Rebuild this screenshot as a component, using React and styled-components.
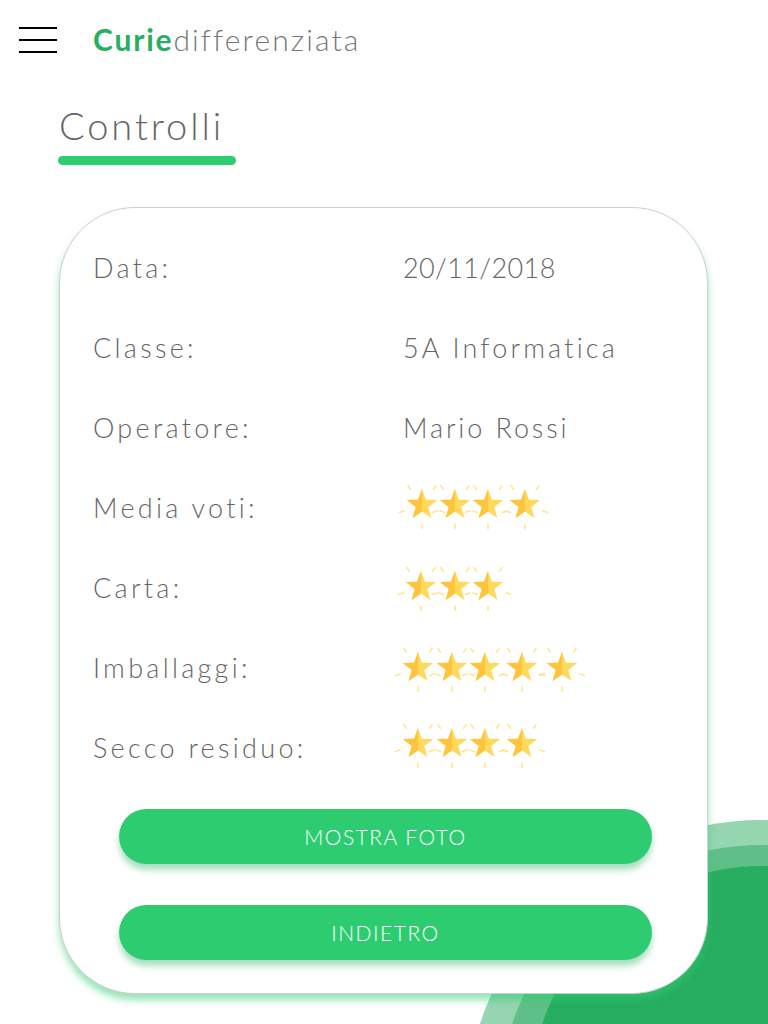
import React from "react";
import styled, { createGlobalStyle } from "styled-components";

const GlobalStyle = createGlobalStyle`
  html, body { margin: 0; padding: 0; background: #ffffff; }
  body { font-family: Lato, "Open Sans", sans-serif; }
  * { box-sizing: border-box; }
`;

const Page = styled.div`
  position: relative;
  width: 768px;
  height: 1024px;
  overflow: hidden;
  background: #fff;
`;

const Backdrop = styled.svg`
  position: absolute;
  right: 0;
  bottom: 0;
  width: 768px;
  height: 1024px;
  z-index: 0;
  pointer-events: none;
`;

const Content = styled.div`
  position: relative;
  z-index: 1;
`;

const Header = styled.header`
  display: flex;
  align-items: center;
  height: 80px;
  padding-left: 19px;
  gap: 36px;
`;

const Burger = styled.div`
  display: flex;
  flex-direction: column;
  gap: 10.5px;
  width: 38px;
  & > span {
    display: block;
    height: 1.5px;
    background: #000;
  }
`;

const Logo = styled.div`
  font-size: 30px;
  letter-spacing: 2.1px;
  color: #777;
  font-weight: 300;
  line-height: 1;
  margin-top: -2px;
`;

const LogoStrong = styled.span`
  color: #27ae60;
  font-weight: 700;
  letter-spacing: 1.8px;
`;

const TitleBlock = styled.div`
  padding-left: 58px;
  margin-top: 22px;
  display: inline-flex;
  flex-direction: column;
`;

const Title = styled.h1`
  margin: 0 0 0 1px;
  font-size: 38px;
  font-weight: 300;
  letter-spacing: 2.9px;
  color: #666;
  line-height: 46px;
`;

const Underline = styled.div`
  margin-top: 8px;
  width: 178px;
  height: 9px;
  border-radius: 5px;
  background: #2ecc71;
`;

const Card = styled.section`
  margin: 42px 0 0 59px;
  width: 649px;
  height: 787px;
  border: 1px solid #cfcfcf;
  border-radius: 76px;
  background: #fff;
  box-shadow: 0 6px 7px rgba(46, 204, 113, 0.5);
  padding: 19px 0 0 33px;
`;

const Rows = styled.div`
  display: grid;
  grid-template-columns: 310px 1fr;
  grid-auto-rows: 80px;
`;

const Label = styled.div`
  display: flex;
  align-items: center;
  font-size: 27px;
  font-weight: 300;
  letter-spacing: ${(p) => (p.$ls != null ? p.$ls : 3.3)}px;
  color: #666;
`;

const StarRow = styled.div`
  display: flex;
  align-items: center;
  margin-top: ${(p) => p.$dy || 0}px;
`;

const StarBox = styled.svg`
  flex: none;
  width: 46px;
  height: 46px;
  margin-left: ${(p) => p.$ml}px;
  overflow: visible;
`;

const Buttons = styled.div`
  display: flex;
  flex-direction: column;
  gap: 41px;
  margin: 22px 0 0 26px;
  width: 533px;
`;

const Button = styled.button`
  height: 55px;
  border: none;
  border-radius: 28px;
  background: #2ecc71;
  color: #fff;
  font-family: Lato, "Open Sans", sans-serif;
  font-size: 21px;
  font-weight: 300;
  letter-spacing: 1.5px;
  box-shadow: 0 6px 6px rgba(39, 174, 96, 0.4);
  cursor: pointer;
`;

const Star = ({ ml }) => (
  <StarBox $ml={ml} viewBox="-23 -23 46 46">
    <g stroke="#ffe68f" strokeWidth="1.6" strokeLinecap="round">
      <line x1="11.5" y1="-15.8" x2="14.1" y2="-19.4" />
      <line x1="-11.5" y1="-15.8" x2="-14.1" y2="-19.4" />
      <line x1="18" y1="5.9" x2="22.6" y2="7.4" />
      <line x1="-18" y1="5.9" x2="-22.6" y2="7.4" />
      <line x1="0" y1="19" x2="0" y2="23.5" />
    </g>
    <polygon
      fill="#ffd95a"
      points="0,-16 3.9,-5.2 15.2,-4.9 6.2,2 9.4,12.9 0,6.5 -9.4,12.9 -6.2,2 -15.2,-4.9 -3.9,-5.2"
    />
    <polygon
      fill="#ffc43d"
      points="0,-16 -3.9,-5.2 -15.2,-4.9 -6.2,2 -9.4,12.9 0,6.5"
    />
  </StarBox>
);

const Stars = ({ offsets, dy }) => (
  <StarRow $dy={dy}>
    {offsets.map((ml, i) => (
      <Star key={i} ml={ml} />
    ))}
  </StarRow>
);

const rows = [
  { label: "Data:", value: "20/11/2018", ls: 0.4 },
  { label: "Classe:", value: "5A Informatica", ls: 3.2 },
  { label: "Operatore:", value: "Mario Rossi", ls: 2.9 },
  { label: "Media voti:", stars: [-4, -13, -13, -9], dy: -5 },
  { label: "Carta:", stars: [-5, -12, -13] },
  { label: "Imballaggi:", stars: [-8, -12, -13, -9, -6], dy: 2 },
  { label: "Secco residuo:", stars: [-8, -12, -13, -9], dy: -6 },
];

export default function App() {
  return (
    <>
      <GlobalStyle />
      <Page>
        <Backdrop viewBox="0 0 768 1024">
          <circle cx="762" cy="1117" r="297" fill="#95d5b0" />
          <circle cx="762" cy="1109" r="264" fill="#5ec088" />
          <circle cx="762" cy="1098" r="232" fill="#27ae60" />
        </Backdrop>
        <Content>
          <Header>
            <Burger>
              <span />
              <span />
              <span />
            </Burger>
            <Logo>
              <LogoStrong>Curie</LogoStrong>differenziata
            </Logo>
          </Header>
          <TitleBlock>
            <Title>Controlli</Title>
            <Underline />
          </TitleBlock>
          <Card>
            <Rows>
              {rows.map((r) => (
                <React.Fragment key={r.label}>
                  <Label>{r.label}</Label>
                  {r.stars ? (
                    <Stars offsets={r.stars} dy={r.dy} />
                  ) : (
                    <Label $ls={r.ls}>{r.value}</Label>
                  )}
                </React.Fragment>
              ))}
            </Rows>
            <Buttons>
              <Button>MOSTRA FOTO</Button>
              <Button>INDIETRO</Button>
            </Buttons>
          </Card>
        </Content>
      </Page>
    </>
  );
}
